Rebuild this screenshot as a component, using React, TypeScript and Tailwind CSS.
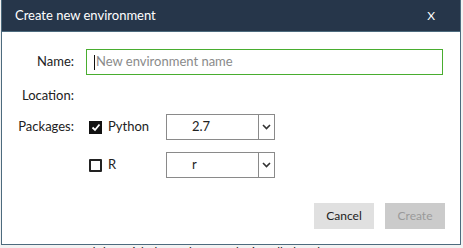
import React from "react";

const font = { fontFamily: 'Lato, "Open Sans", Arial, sans-serif' };

function Chevron() {
  return (
    <svg width="9" height="6" viewBox="0 0 9 6" className="text-[#333]">
      <path d="M1 1l3.5 3.5L8 1" fill="none" stroke="currentColor" strokeWidth="1.6" />
    </svg>
  );
}

function Select({ value }: { value: string }) {
  return (
    <div className="w-[109px] h-[26px] border border-[#8a8a8a] flex bg-white">
      <div className="flex-1 flex items-center pl-[25px] text-[13px] text-[#222]">{value}</div>
      <div className="w-[16px] border-l border-[#8a8a8a] flex items-center justify-center">
        <Chevron />
      </div>
    </div>
  );
}

function Checkbox({ checked }: { checked: boolean }) {
  return checked ? (
    <div className="w-[13px] h-[13px] bg-[#111] flex items-center justify-center">
      <svg width="10" height="9" viewBox="0 0 10 9">
        <path d="M1.5 4.5l2.5 2.5 4.5-5.5" fill="none" stroke="#fff" strokeWidth="1.8" />
      </svg>
    </div>
  ) : (
    <div className="w-[13px] h-[13px] border-2 border-[#222] rounded-[1px]" />
  );
}

export default function App() {
  return (
    <div className="w-[463px] h-[248px] relative overflow-hidden bg-[#f2f2f2]" style={font}>
      <div className="absolute left-[4px] top-[244px] text-[12px] leading-[16px] text-[#222] whitespace-nowrap">
        Enter a name and then pick the packages to be installed packages
      </div>
      <div className="relative ml-px w-[460px] h-[245px] border-x border-b border-[#4d6b7e] bg-white flex flex-col">
        <div className="h-[32px] bg-[#26364a] border-b border-[#4d6b7e] flex items-center justify-between pl-[13px] pr-[25px] text-white text-[13px]">
          <span>Create new environment</span>
          <span className="text-[12px]">X</span>
        </div>
        <div className="flex flex-col text-[13px] text-[#222]">
          <div className="flex items-center mt-[17px] h-[26px]">
            <div className="w-[72px] text-right">Name:</div>
            <div className="ml-[12px] w-[357px] h-[26px] border-[1.5px] border-[#49ad2f] flex items-center pl-[7px] text-[#8a8a8a]">
              <span className="w-px h-[15px] bg-[#111] mr-px" />
              New environment name
            </div>
          </div>
          <div className="flex items-center mt-[9px] h-[24px]">
            <div className="w-[72px] text-right">Location:</div>
          </div>
          <div className="flex items-center mt-[6px] h-[26px]">
            <div className="w-[72px] text-right">Packages:</div>
            <div className="ml-[15px] w-[77px] flex items-center gap-[6px]">
              <Checkbox checked />
              <span>Python</span>
            </div>
            <Select value="2.7" />
          </div>
          <div className="flex items-center mt-[12px] h-[26px]">
            <div className="w-[72px]" />
            <div className="ml-[15px] w-[77px] flex items-center gap-[6px]">
              <Checkbox checked={false} />
              <span>R</span>
            </div>
            <Select value="r" />
          </div>
          <div className="flex justify-end gap-[11px] mt-[25px] pr-[15px]">
            <button className="w-[60px] h-[26px] bg-[#e0e0e0] text-[12px] text-[#222]">Cancel</button>
            <button className="w-[60px] h-[26px] bg-[#cbcbcb] text-[12px] text-[#9a9a9a]">Create</button>
          </div>
        </div>
      </div>
    </div>
  );
}
